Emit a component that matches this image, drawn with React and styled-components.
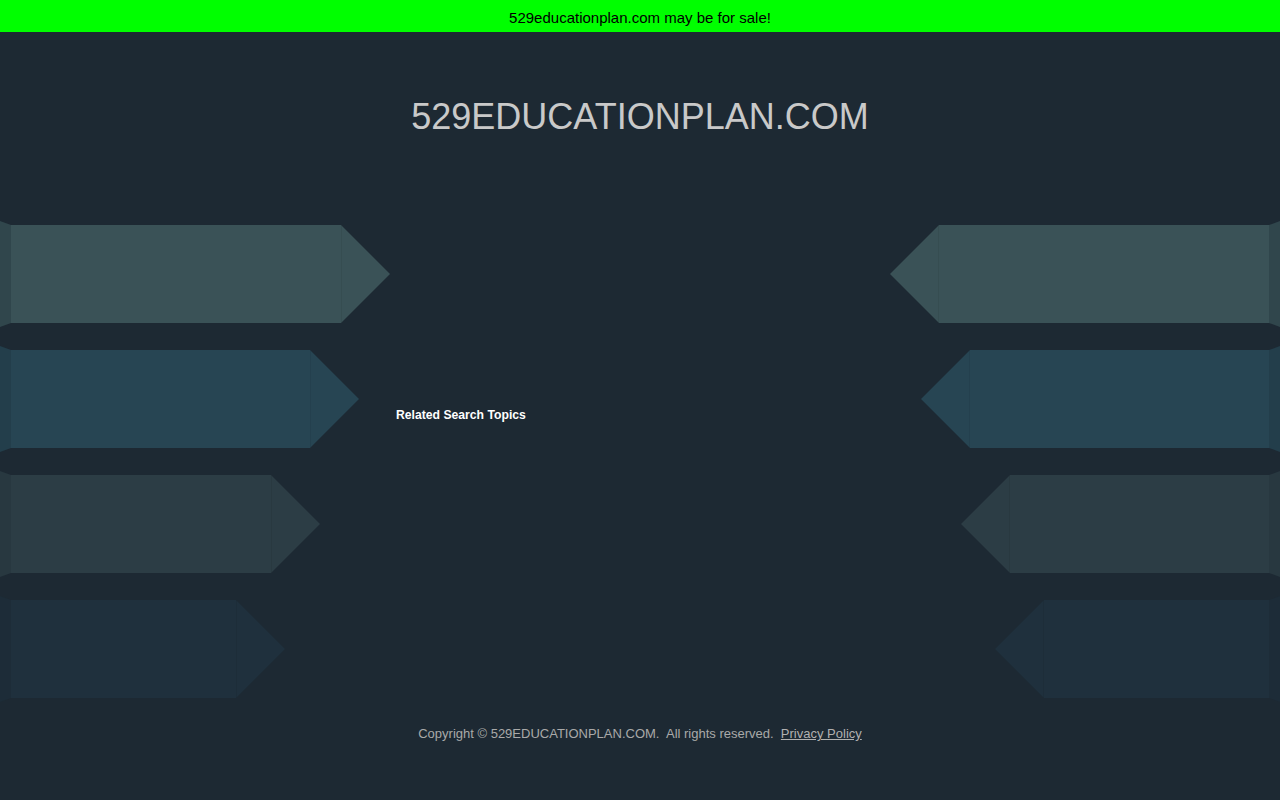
import React from "react";
import styled, { createGlobalStyle } from "styled-components";

const GlobalStyle = createGlobalStyle`
  html, body {
    margin: 0;
    padding: 0;
    background: #1d2933;
  }
  body {
    font-family: "Liberation Sans", Arial, sans-serif;
  }
`;

const leftRows = [
  { width: 390, body: "#3a5257", edge: "#30464c" },
  { width: 359, body: "#274553", edge: "#233e4b" },
  { width: 320, body: "#2c3d45", edge: "#283840" },
  { width: 285, body: "#1f303d", edge: "#1d2c38" },
];

const rightRows = [
  { width: 390, body: "#3a5257", edge: "#30464c" },
  { width: 359, body: "#274553", edge: "#233e4b" },
  { width: 319, body: "#2c3d45", edge: "#283840" },
  { width: 285, body: "#1f303d", edge: "#1d2c38" },
];

export default function App() {
  return (
    <>
      <GlobalStyle />
      <Page>
        <SaleBanner>529educationplan.com may be for sale!</SaleBanner>
        <Title>529EDUCATIONPLAN.COM</Title>
        <Main>
          <ArrowColumn $side="left">
            {leftRows.map((row, i) => (
              <Arrow key={i} side="left" {...row} />
            ))}
          </ArrowColumn>
          <Center>
            <TopicsHeading>Related Search Topics</TopicsHeading>
          </Center>
          <ArrowColumn $side="right">
            {rightRows.map((row, i) => (
              <Arrow key={i} side="right" {...row} />
            ))}
          </ArrowColumn>
        </Main>
        <Footer>
          Copyright © 529EDUCATIONPLAN.COM.&nbsp; All rights reserved.&nbsp;{" "}
          <FooterLink href="#">Privacy Policy</FooterLink>
        </Footer>
      </Page>
    </>
  );
}

function Arrow({ side, width, body, edge }) {
  const flip = side === "right";
  return (
    <ArrowRow $flip={flip} style={{ width }}>
      <ArrowEdge $flip={flip} $color={edge} />
      <ArrowBody $color={body} />
      <ArrowTip $flip={flip} $color={body} />
    </ArrowRow>
  );
}

const Page = styled.div`
  min-height: 800px;
  display: flex;
  flex-direction: column;
`;

const SaleBanner = styled.div`
  height: 32px;
  background: #00ff00;
  color: #000;
  font-size: 15px;
  display: flex;
  align-items: center;
  justify-content: center;
  padding-top: 2px;
  box-sizing: border-box;
`;

const Title = styled.h1`
  margin: 64px 0 0;
  text-align: center;
  font-weight: normal;
  font-size: 36px;
  line-height: 42px;
  color: #c9c9c9;
`;

const Main = styled.div`
  margin-top: 83px;
  display: grid;
  grid-template-columns: 390px 1fr 390px;
`;

const ArrowColumn = styled.div`
  display: flex;
  flex-direction: column;
  align-items: ${(p) => (p.$side === "left" ? "flex-start" : "flex-end")};
  gap: 19px;
`;

const ArrowRow = styled.div`
  display: flex;
  flex-direction: ${(p) => (p.$flip ? "row-reverse" : "row")};
  align-items: center;
  height: 106px;
`;

const ArrowEdge = styled.div`
  width: 11px;
  height: 106px;
  flex-shrink: 0;
  background: ${(p) => p.$color};
  clip-path: ${(p) =>
    p.$flip
      ? "polygon(0 4px, 100% 0, 100% 100%, 0 calc(100% - 4px))"
      : "polygon(0 0, 100% 4px, 100% calc(100% - 4px), 0 100%)"};
`;

const ArrowBody = styled.div`
  flex: 1;
  height: 98px;
  background: ${(p) => p.$color};
`;

const ArrowTip = styled.div`
  width: 49px;
  height: 98px;
  flex-shrink: 0;
  background: ${(p) => p.$color};
  clip-path: ${(p) =>
    p.$flip
      ? "polygon(100% 0, 0 50%, 100% 100%)"
      : "polygon(0 0, 100% 50%, 0 100%)"};
  box-shadow: inset ${(p) => (p.$flip ? "-1px" : "1px")} 0 0 rgba(0, 0, 0, 0.06);
`;

const Center = styled.div`
  padding: 187px 6px 0;
`;

const TopicsHeading = styled.h2`
  margin: 0;
  font-size: 12.2px;
  font-weight: bold;
  color: #ffffff;
`;

const Footer = styled.footer`
  margin-top: 24px;
  text-align: center;
  font-size: 13px;
  color: #a9a9a9;
`;

const FooterLink = styled.a`
  color: #b0b0b0;
  text-decoration: underline;
`;
